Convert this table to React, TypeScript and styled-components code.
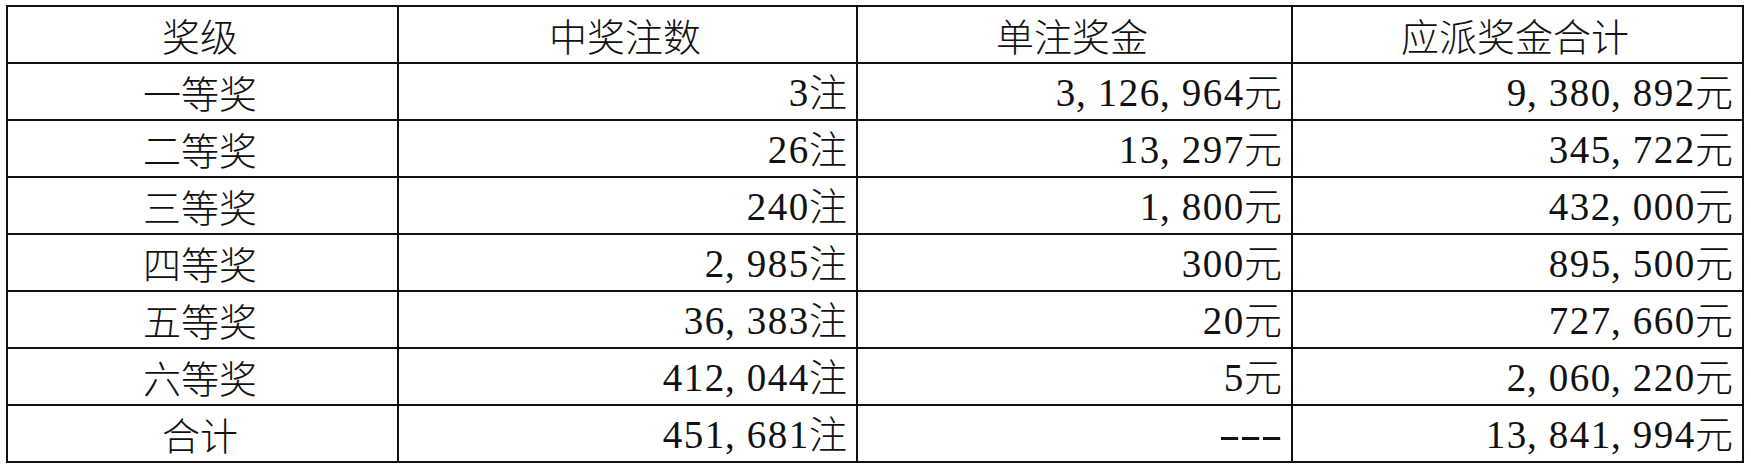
import React from "react";
import styled, { createGlobalStyle } from "styled-components";

const GlobalStyle = createGlobalStyle`
  html, body {
    margin: 0;
    padding: 0;
    background: #ffffff;
  }
  body {
    font-family: "Noto Sans CJK SC", "Liberation Serif", serif;
    color: #111;
  }
`;

const Page = styled.div`
  padding: 5px 0 0 6px;
`;

const Table = styled.table`
  width: 1736px;
  table-layout: fixed;
  border-collapse: collapse;
  border: 2px solid #111;
`;

const Cell = styled.td<{ $align?: "center" | "right" }>`
  height: 55px;
  padding: 0 9px 0 4px;
  border: 2px solid #111;
  text-align: ${(p) => p.$align || "right"};
  font-size: 38px;
  line-height: 1;
  font-weight: 300;
  white-space: nowrap;
  vertical-align: middle;
`;

const HeadCell = styled(Cell).attrs({ as: "th" })`
  font-weight: 300;
`;

// half-width slot, like the fixed-pitch digits of a Song typeface
const Ch = styled.span<{ $kind?: "comma" | "dash" | "digit" }>`
  display: inline-block;
  width: 21px;
  font-family: "Liberation Serif", serif;
  font-size: 39px;
  text-align: ${(p) => (p.$kind === "comma" ? "left" : "center")};
  transform: ${(p) => (p.$kind === "dash" ? "scaleX(1.7)" : "none")};
`;

const Unit = styled.span`
  font-family: "Noto Sans CJK SC", sans-serif;
`;

type Row = {
  level: string;
  count: string;
  single: string;
  total: string;
};

const rows: Row[] = [
  { level: "一等奖", count: "3", single: "3,126,964", total: "9,380,892" },
  { level: "二等奖", count: "26", single: "13,297", total: "345,722" },
  { level: "三等奖", count: "240", single: "1,800", total: "432,000" },
  { level: "四等奖", count: "2,985", single: "300", total: "895,500" },
  { level: "五等奖", count: "36,383", single: "20", total: "727,660" },
  { level: "六等奖", count: "412,044", single: "5", total: "2,060,220" },
  { level: "合计", count: "451,681", single: "---", total: "13,841,994" },
];

const kindOf = (c: string) =>
  c === "," ? "comma" : c === "-" ? "dash" : "digit";

const Digits: React.FC<{ text: string }> = ({ text }) => (
  <>
    {text.split("").map((c, i) => (
      <Ch key={i} $kind={kindOf(c)}>
        {c}
      </Ch>
    ))}
  </>
);

const Value: React.FC<{ n: string; unit: string }> = ({ n, unit }) =>
  n === "---" ? (
    <Digits text="---" />
  ) : (
    <>
      <Digits text={n} />
      <Unit>{unit}</Unit>
    </>
  );

export default function App() {
  return (
    <>
      <GlobalStyle />
      <Page>
        <Table>
          <colgroup>
            <col style={{ width: 391 }} />
            <col style={{ width: 459 }} />
            <col style={{ width: 435 }} />
            <col style={{ width: 451 }} />
          </colgroup>
          <thead>
            <tr>
              <HeadCell $align="center">奖级</HeadCell>
              <HeadCell $align="center">中奖注数</HeadCell>
              <HeadCell $align="center">单注奖金</HeadCell>
              <HeadCell $align="center">应派奖金合计</HeadCell>
            </tr>
          </thead>
          <tbody>
            {rows.map((r, i) => (
              <tr key={i}>
                <Cell $align="center">{r.level}</Cell>
                <Cell>
                  <Value n={r.count} unit="注" />
                </Cell>
                <Cell>
                  <Value n={r.single} unit="元" />
                </Cell>
                <Cell>
                  <Value n={r.total} unit="元" />
                </Cell>
              </tr>
            ))}
          </tbody>
        </Table>
      </Page>
    </>
  );
}
